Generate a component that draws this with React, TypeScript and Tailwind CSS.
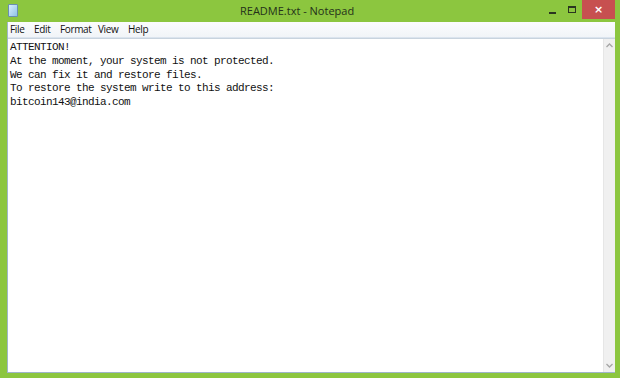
import React from "react";

export default function App() {
  const lines = [
    "ATTENTION!",
    "At the moment, your system is not protected.",
    "We can fix it and restore files.",
    "To restore the system write to this address:",
    "bitcoin143@india.com",
  ];
  return (
    <div className="w-[620px] h-[378px] bg-[#8cc63f] flex flex-col overflow-hidden" style={{ fontFamily: '"Open Sans","Noto Sans",sans-serif' }}>
      {/* title bar */}
      <div className="h-[22px] flex items-start relative shrink-0">
        <div className="ml-[8px] mt-[4px] w-[10px] h-[13px] bg-gradient-to-br from-[#d8eefc] to-[#8fc3e6] border border-[#6a8fb0] rounded-[1px]" />
        <div className="absolute left-[240px] top-[2px] text-[11px] leading-[18px] text-[#24301a]">README.txt - Notepad</div>
        <div className="ml-auto flex items-start h-[19px]">
          <div className="w-[20px] h-[19px] flex items-center justify-center">
            <div className="w-[7px] h-[2px] bg-[#2a3520] mt-[6px]" />
          </div>
          <div className="w-[20px] h-[19px] flex items-center justify-center">
            <div className="w-[8px] h-[7px] border border-[#2a3520] border-t-2" />
          </div>
          <div className="w-[33px] h-[19px] bg-[#c75050] flex items-center justify-center mr-[5px] text-white text-[11px] font-bold leading-none" style={{ fontFamily: '"DejaVu Sans",sans-serif' }}>
            ×
          </div>
        </div>
      </div>
      {/* client area */}
      <div className="flex-1 flex flex-col ml-[7px] mr-[5px] mb-[5px] bg-white border-l border-b border-[#9fb5c9]">
        <div className="h-[16px] bg-gradient-to-b from-[#fbfcfd] to-[#f1f4f8] border-b border-[#dbe4ee] flex items-center text-[10px] tracking-[-0.35px] text-[#111] shrink-0 pl-[2px]">
          <span className="w-[24px]">File</span>
          <span className="w-[26px]">Edit</span>
          <span className="w-[38px]">Format</span>
          <span className="w-[30px]">View</span>
          <span>Help</span>
        </div>
        <div className="flex-1 flex border-t border-[#c8d3de]">
          <div className="flex-1 pl-[2px] pt-[2px] text-[11px] leading-[13.75px] tracking-[-0.6px] text-[#111]" style={{ fontFamily: '"Liberation Mono","DejaVu Sans Mono",monospace' }}>
            {lines.map((l, i) => (
              <div key={i} className="whitespace-pre">{l}</div>
            ))}
          </div>
          <div className="w-[12px] bg-[#f0f0f0] border-l border-[#e6e6e6] flex flex-col items-center justify-between py-[4px]">
            <svg width="7" height="5" viewBox="0 0 7 5"><path d="M0.5 4 L3.5 1 L6.5 4" fill="none" stroke="#a6a6a6" strokeWidth="1.3" /></svg>
            <svg width="7" height="5" viewBox="0 0 7 5"><path d="M0.5 1 L3.5 4 L6.5 1" fill="none" stroke="#a6a6a6" strokeWidth="1.3" /></svg>
          </div>
        </div>
      </div>
    </div>
  );
}
